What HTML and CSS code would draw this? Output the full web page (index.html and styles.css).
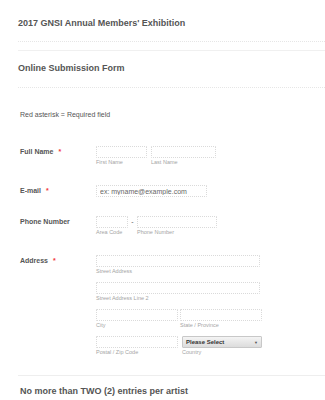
FILE: index.html
```html
<!DOCTYPE html>
<html lang="en">
<head>
    <meta charset="UTF-8">
    <meta name="viewport" content="width=device-width, initial-scale=1.0">
    <title>2017 GNSI Annual Members' Exhibition</title>
    <link rel="stylesheet" href="styles.css">
</head>
<body>
    <div class="form-header">
        <div class="title-block">
            <h1>2017 GNSI Annual Members' Exhibition</h1>
        </div>
        <div class="subtitle-block">
            <h2>Online Submission Form</h2>
        </div>
    </div>

    <p class="note">Red asterisk = Required field</p>

    <!-- Full name -->
    <div class="row">
        <label class="label">Full Name <span class="req">*</span></label>
        <div class="fields">
            <div class="field">
                <input class="box w-first" type="text">
                <span class="sub">First Name</span>
            </div>
            <div class="field">
                <input class="box w-last" type="text">
                <span class="sub">Last Name</span>
            </div>
        </div>
    </div>

    <!-- Email -->
    <div class="row">
        <label class="label">E-mail <span class="req">*</span></label>
        <div class="fields">
            <input class="box w-email" type="text" placeholder="ex: myname@example.com">
        </div>
    </div>

    <!-- Phone -->
    <div class="row">
        <label class="label">Phone Number</label>
        <div class="fields phone">
            <div class="field">
                <input class="box w-area" type="text">
                <span class="sub">Area Code</span>
            </div>
            <span class="dash">-</span>
            <div class="field">
                <input class="box w-phone" type="text">
                <span class="sub">Phone Number</span>
            </div>
        </div>
    </div>

    <!-- Address -->
    <div class="row">
        <label class="label">Address <span class="req">*</span></label>
        <div class="address">
            <div class="field">
                <input class="box w-street" type="text">
                <span class="sub">Street Address</span>
            </div>
            <div class="field">
                <input class="box w-street" type="text">
                <span class="sub">Street Address Line 2</span>
            </div>
            <div class="fields tight">
                <div class="field">
                    <input class="box w-half" type="text">
                    <span class="sub">City</span>
                </div>
                <div class="field">
                    <input class="box w-state" type="text">
                    <span class="sub">State / Province</span>
                </div>
            </div>
            <div class="fields">
                <div class="field">
                    <input class="box w-half" type="text">
                    <span class="sub">Postal / Zip Code</span>
                </div>
                <div class="field">
                    <div class="select">Please Select <span class="arrow">&#9660;</span></div>
                    <span class="sub">Country</span>
                </div>
            </div>
        </div>
    </div>

    <div class="section">
        <h2>No more than TWO (2) entries per artist</h2>
    </div>
</body>
</html>
```

FILE: styles.css
```css
body {
    margin: 0;
    background: #fff;
    font-family: 'Liberation Sans', Arial, sans-serif;
    color: #555;
    overflow: hidden;
}

h1, h2 {
    margin: 0;
    font-size: 9px;
    line-height: 11px;
    font-weight: bold;
    color: #555;
}

.form-header {
    margin-left: 18px;
}

.title-block {
    padding: 18px 0 12px;
    border-bottom: 1px dotted #e6e6e6;
}

.subtitle-block {
    margin-top: 8px;
    border-top: 1px solid #f0f0f0;
    padding: 12px 0 13px;
    border-bottom: 1px dotted #e6e6e6;
}

.note {
    margin: 22px 0 27px 20px;
    font-size: 7px;
    line-height: 9px;
    color: #555;
}

.row {
    display: grid;
    grid-template-columns: 76px auto;
    padding-left: 20px;
    margin-bottom: 19px;
}

.label {
    font-size: 7px;
    line-height: 12px;
    font-weight: bold;
    color: #555;
}

.req {
    color: #f23a3c;
    margin-left: 3px;
}

.fields {
    display: flex;
    gap: 4px;
}

.fields.tight {
    gap: 2px;
}

.phone {
    gap: 0;
}

.dash {
    width: 9px;
    text-align: center;
    font-size: 7px;
    line-height: 12px;
    color: #555;
}

.field {
    display: flex;
    flex-direction: column;
}

.address {
    display: flex;
    flex-direction: column;
    gap: 7px;
}

.box {
    box-sizing: border-box;
    height: 12px;
    margin: 0;
    padding: 0 3px;
    border: 1px dotted #dadada;
    border-radius: 1px;
    background: #fff;
    font-family: 'Liberation Sans', Arial, sans-serif;
    font-size: 7px;
    color: #666;
    outline: none;
}

.box::placeholder {
    color: #666;
}

.sub {
    font-size: 5.5px;
    line-height: 8px;
    color: #a5a5a5;
}

.w-first { width: 51px; }
.w-last { width: 65px; }
.w-email { width: 111px; }
.w-area { width: 32px; }
.w-phone { width: 80px; }
.w-street { width: 164px; }
.w-half { width: 82px; }
.w-state { width: 82px; }

.select {
    box-sizing: border-box;
    width: 80px;
    height: 12px;
    padding: 0 3px;
    display: flex;
    justify-content: space-between;
    align-items: center;
    border: 1px solid #c8c8c8;
    border-radius: 1px;
    background: linear-gradient(#f4f4f4, #dcdcdc);
    font-size: 6px;
    font-weight: bold;
    color: #333;
}

.arrow {
    font-size: 4px;
    color: #555;
}

.section {
    margin: 18px 0 0 18px;
    border-top: 1px solid #eee;
    padding: 10px 0 0 2px;
}
```
